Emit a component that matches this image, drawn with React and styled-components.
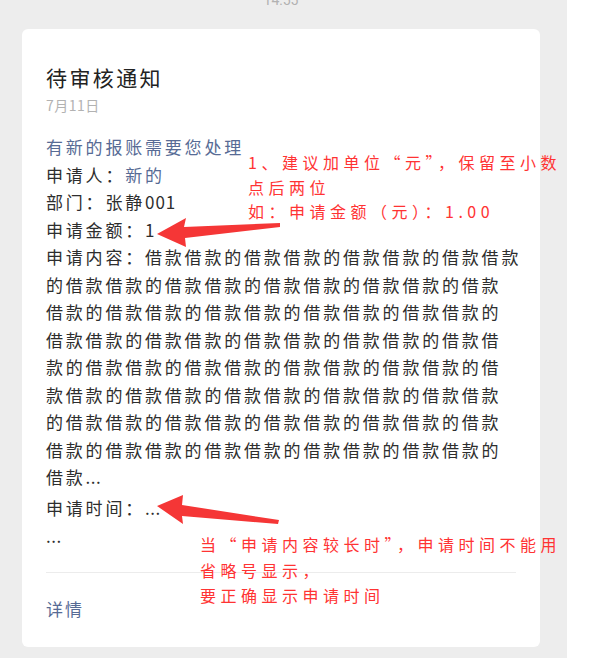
import React from "react";
import styled, { createGlobalStyle } from "styled-components";

const GlobalStyle = createGlobalStyle`
  html, body { margin: 0; padding: 0; background: #ffffff; }
  body { font-family: "Noto Sans CJK SC", "Noto Sans", sans-serif; }
  * { box-sizing: border-box; }
`;

const Screen = styled.div`
  position: relative;
  width: 589px;
  height: 658px;
  overflow: hidden;
  background: #ffffff;
`;

const Chat = styled.div`
  width: 567px;
  height: 658px;
  background: #ededed;
  padding: 0 27px 0 22px;
  display: flex;
  flex-direction: column;
`;

const TimeStamp = styled.div`
  margin-top: -10px;
  height: 39px;
  line-height: 20px;
  font-size: 14px;
  color: #b2b2b2;
  text-align: center;
  font-family: "Roboto", "Noto Sans", sans-serif;
`;

const Card = styled.div`
  background: #ffffff;
  border-radius: 6px;
  padding: 34px 24px 25px;
  display: flex;
  flex-direction: column;
`;

const Title = styled.div`
  font-size: 21px;
  line-height: 28px;
  letter-spacing: 2.4px;
  color: #222222;
`;

const DateText = styled.div`
  margin-top: 4px;
  font-size: 14px;
  line-height: 20px;
  letter-spacing: 0.5px;
  color: #b2b2b2;
`;

const Body = styled.div`
  margin-top: 18px;
  font-size: 17px;
  line-height: 27.5px;
  letter-spacing: 2.8px;
  color: #2e2e2e;
`;

const Line = styled.div`
  white-space: nowrap;
  margin-top: ${(p) => (p.$gap ? `${p.$gap}px` : "0")};
  color: ${(p) => (p.$blue ? "#576b95" : "inherit")};
`;

const Blue = styled.span`
  color: #576b95;
`;

const Num = styled.span`
  letter-spacing: 1px;
`;

const Dots = styled.span`
  letter-spacing: 0.5px;
`;

const Divider = styled.div`
  height: 1px;
  background: #ececec;
  margin: 22px 0 22px;
`;

const Detail = styled.div`
  font-size: 17px;
  line-height: 27.5px;
  letter-spacing: 2px;
  color: #576b95;
`;

const Note = styled.div`
  position: absolute;
  left: ${(p) => p.$left}px;
  top: ${(p) => p.$top}px;
  font-size: 16px;
  line-height: ${(p) => p.$lh}px;
  letter-spacing: 4.5px;
  color: #ff3333;
  white-space: nowrap;
`;

const Arrows = styled.svg`
  position: absolute;
  left: 0;
  top: 0;
  pointer-events: none;
`;

const unit = "借款借款的";
const S = unit.repeat(36);
const contentLines = [];
contentLines.push(S.slice(0, 19));
for (let i = 0; i < 7; i++) {
  contentLines.push(S.slice(19 + 23 * i, 19 + 23 * (i + 1)));
}

export default function App() {
  return (
    <>
      <GlobalStyle />
      <Screen>
        <Chat>
          <TimeStamp>14:55</TimeStamp>
          <Card>
            <Title>待审核通知</Title>
            <DateText>7月11日</DateText>
            <Body>
              <Line $blue>有新的报账需要您处理</Line>
              <Line>
                申请人：<Blue>新的</Blue>
              </Line>
              <Line>
                部门：张静<Num>001</Num>
              </Line>
              <Line>申请金额：1</Line>
              <Line>申请内容：{contentLines[0]}</Line>
              {contentLines.slice(1).map((l, i) => (
                <Line key={i}>{l}</Line>
              ))}
              <Line>
                借款<Dots>...</Dots>
              </Line>
              <Line $gap={3}>
                申请时间：<Dots>...</Dots>
              </Line>
              <Line $gap={1}>
                <Dots>...</Dots>
              </Line>
            </Body>
            <Divider />
            <Detail>详情</Detail>
          </Card>
        </Chat>

        <Note $left={248} $top={150} $lh={24.5}>
          1、建议加单位“元”，保留至小数
          <br />
          点后两位
          <br />
          如：申请金额（元）：1.00
        </Note>

        <Note $left={200} $top={532} $lh={25.5}>
          当“申请内容较长时”，申请时间不能用
          <br />
          省略号显示，
          <br />
          要正确显示申请时间
        </Note>

        <Arrows width="589" height="658" viewBox="0 0 589 658">
          <polygon
            fill="#f53636"
            points="157,234 186,218 184,227 280,223 280,227 185,238 186,247"
          />
          <polygon
            fill="#f53636"
            points="157,506 183,495 182,505 279,520 278,524 182,516 183,524"
          />
        </Arrows>
      </Screen>
    </>
  );
}
